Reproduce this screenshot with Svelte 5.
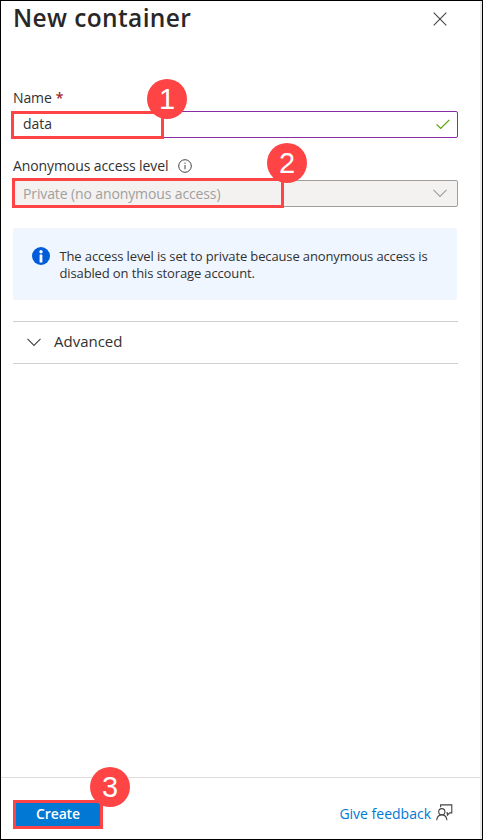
<script>
  let name = $state('data');
</script>

<main class="panel">
  <header>
    <h1>New container</h1>
    <button class="close" aria-label="Close">
      <svg width="14" height="14" viewBox="0 0 14 14"><path d="M.7.7 13.3 13.3M13.3.7.7 13.3" /></svg>
    </button>
  </header>

  <section class="body">
    <div class="label"><span class="t-name">Name</span><span class="star">*</span></div>
    <div class="field name">
      <input bind:value={name} aria-label="Name" />
      <svg class="check" width="14" height="11" viewBox="0 0 14 11"><path d="M.6 5.4 4.7 9.5 13.3.8" /></svg>
      <div class="mark m1"></div>
      <div class="badge b1">1</div>
    </div>

    <div class="label second">
      <span class="t-access">Anonymous access level</span>
      <svg class="hint" width="14" height="14" viewBox="0 0 14 14"><circle cx="7" cy="7" r="6.3" /><path d="M7 6v4.3M7 3.6v1.2" /></svg>
    </div>
    <div class="field select">
      <span class="t-private">Private (no anonymous access)</span>
      <svg class="chev" width="14" height="9" viewBox="0 0 14 9"><path d="M.5.8 7 7.5 13.5.8" /></svg>
      <div class="mark m2"></div>
      <div class="badge b2">2</div>
    </div>

    <div class="info">
      <svg width="18" height="18" viewBox="0 0 18 18"><circle cx="9" cy="9" r="9" fill="#015cda" /><circle cx="9" cy="4.7" r="1.7" fill="#fff" /><rect x="7.6" y="7.5" width="2.8" height="8" rx=".6" fill="#fff" /></svg>
      <p><span class="l1">The access level is set to private because anonymous access is</span><br /><span class="l2">disabled on this storage account.</span></p>
    </div>

    <div class="advanced">
      <svg width="14" height="9" viewBox="0 0 14 9"><path d="M.5.8 7 7.5 13.5.8" /></svg>
      <span>Advanced</span>
    </div>
  </section>

  <footer>
    <div class="create-wrap">
      <button class="create">Create</button>
      <div class="badge b3">3</div>
    </div>
    <div class="feedback">
      <span>Give feedback</span>
      <svg width="17" height="17" viewBox="0 0 17 17"><path d="M4.6 3.2V.9h11.2v8h-2.1l-2.3 2.3V8.9h-1" /><circle cx="5.8" cy="7.7" r="3.1" /><path d="M.7 16.3c.3-3.2 2.2-5.4 5.1-5.4s4.8 2.2 5.1 5.4" /></svg>
    </div>
  </footer>
</main>

<style>
  :global(body) { margin: 0; background: #fff; }
  .panel {
    box-sizing: border-box; width: 483px; height: 840px;
    border: 1px solid #000; box-shadow: inset -2px 0 0 #e9e9e9;
    display: flex; flex-direction: column; overflow: hidden;
    font-family: "Open Sans", "Noto Sans", sans-serif; font-size: 14px; color: #323130;
    background: #fff;
  }
  svg { display: block; flex: none; fill: none; stroke: #444; stroke-width: 1.1; }
  span { white-space: nowrap; }
  header { display: flex; justify-content: space-between; height: 86px; padding: 0 34px 0 12px; align-items: flex-start; }
  h1 { margin: 0; font-size: 24.5px; line-height: 34px; font-weight: 600; letter-spacing: .38px; color: #292827; white-space: nowrap; }
  .close { border: 0; background: none; padding: 11px 1px 0 0; }
  .body { padding: 0 24px 0 12px; flex: 1; }
  .label { display: flex; height: 24px; line-height: 21px; align-items: flex-start; }
  .t-name { letter-spacing: -.1px; }
  .star { color: #a4262c; font-weight: 600; margin-left: 4px; }
  .second { margin-top: 17px; height: 25px; }
  .t-access { letter-spacing: -.1px; }
  .hint { margin: 4px 0 0 10px; stroke-width: 1; }
  .field { position: relative; box-sizing: border-box; height: 27px; border: 1px solid #8a2da5; border-radius: 2px; display: flex; align-items: center; justify-content: space-between; padding: 0 7px 0 9px; }
  input { border: 0; outline: 0; padding: 0 0 2px; margin: 0; height: 23px; width: 200px; font: inherit; color: inherit; background: transparent; }
  .check { stroke: #57a300; stroke-width: 1.2; }
  .select { background: #f3f2f1; border-color: #a19f9d; color: #a19f9d; padding-right: 10px; }
  .t-private { letter-spacing: -.12px; }
  .select .chev { stroke: #a19f9d; }
  .mark { position: absolute; box-sizing: border-box; border: 3px solid #fe4445; }
  .m1 { left: -3px; top: -1px; width: 153px; height: 28px; }
  .m2 { left: -2px; top: -3px; width: 272px; height: 30px; }
  .badge { position: absolute; width: 40px; height: 40px; border-radius: 50%; background: #fe4445; color: #fff; font: 29px/41px "Liberation Sans", Arial, sans-serif; text-align: center; }
  .b1 { left: 133px; top: -33px; }
  .b2 { left: 253px; top: -38px; }
  .b3 { left: 77px; top: -33px; }
  .info { margin: 21px 1px 0 0; box-sizing: border-box; height: 72px; width: 444px; background: #eff6ff; border-radius: 2px; padding: 19px 0 0 19px; display: flex; gap: 10px; }
  .info svg { stroke: none; }
  p { margin: 0; font-size: 13px; line-height: 17px; letter-spacing: -.13px; }
  .info p { padding-top: 1px; margin-left: -.5px; }
  .advanced { margin-top: 21px; height: 41px; border: solid #d2d0ce; border-width: 1px 0; display: flex; align-items: center; padding-left: 14px; gap: 13px; font-size: 15px; }
  .advanced span { padding-bottom: 3px; }
  footer { height: 62px; box-sizing: border-box; border-top: 1px solid #dddcdb; margin-right: 2px; display: flex; justify-content: space-between; align-items: flex-start; padding: 22px 27px 0 12px; }
  .create-wrap { position: relative; }
  .create { display: block; width: 90px; height: 29px; border: 3px solid #fe4445; border-radius: 0; background: #0078d4; color: #fff; font: 600 14px/22px "Open Sans", sans-serif; letter-spacing: -.15px; padding: 0 0 2px; }
  .feedback { display: flex; gap: 5px; color: #0078d4; line-height: 28px; }
  .feedback svg { margin-top: 4px; }
</style>
